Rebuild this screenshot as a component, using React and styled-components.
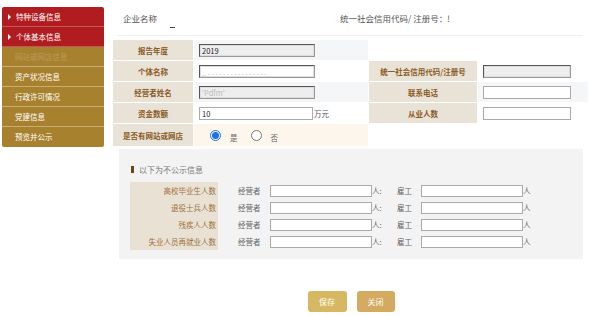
import React from 'react';
import styled, { createGlobalStyle } from 'styled-components';

const GlobalStyle = createGlobalStyle`
  html, body { margin: 0; padding: 0; background: #fff; }
  body { font-family: "Noto Sans CJK SC", "Noto Sans", sans-serif; }
  * { box-sizing: border-box; }
`;

const Page = styled.div`
  display: flex;
  align-items: flex-start;
  width: 590px;
  height: 316px;
  overflow: hidden;
`;

const Sidebar = styled.ul`
  list-style: none;
  margin: 7px 0 0 2px;
  padding: 0;
  width: 102px;
  border-radius: 2px;
  overflow: hidden;
`;

const NavItem = styled.li`
  display: flex;
  align-items: center;
  height: 20px;
  padding-left: ${p => (p.arrow ? '6px' : '13px')};
  background: ${p => (p.active ? '#b11c20' : '#a8812f')};
  border-bottom: 1px solid ${p => (p.active ? '#c4575a' : '#c8ad76')};
  color: ${p => (p.faded ? 'rgba(255,255,255,0.22)' : '#fff')};
  font-size: 7.5px;
  line-height: 1;
  white-space: nowrap;
  &:last-child { border-bottom: none; }
`;

const Arrow = styled.span`
  width: 0;
  height: 0;
  border-left: 3px solid #fff;
  border-top: 3px solid transparent;
  border-bottom: 3px solid transparent;
  margin-right: 5px;
`;

const Main = styled.div`
  margin-left: 9px;
  width: 475px;
  display: flex;
  flex-direction: column;
`;

const Header = styled.div`
  display: flex;
  align-items: center;
  height: 36px;
  margin: 0 0 0 5px;
  width: 465px;
  padding-left: 5px;
  border-bottom: 1px solid #eeeeee;
  color: #555;
  font-size: 8.5px;
`;

const HeaderField = styled.div`
  position: relative;
  width: ${p => p.w || 'auto'};
  white-space: nowrap;
`;

const Mark = styled.span`
  position: absolute;
  left: 47px;
  top: 15px;
  width: 5px;
  height: 1px;
  background: #444;
`;

const Table = styled.div`
  display: grid;
  grid-template-columns: 80px 174px 108px 110px;
  grid-auto-rows: 20px;
  gap: 1px;
  margin-top: 4px;
  background: #fff;
`;

const Label = styled.div`
  display: flex;
  align-items: center;
  justify-content: center;
  background: #e9e2d7;
  color: #8a5a24;
  font-size: 7.5px;
  font-weight: 700;
  white-space: nowrap;
  ${p => p.tall && 'height: 22px;'}
`;

const Cell = styled.div`
  display: flex;
  align-items: center;
  padding-left: ${p => p.pad || '5px'};
  background: ${p => p.bg || '#fff'};
  font-size: 7.5px;
  color: #333;
  ${p => p.span && `grid-column: span ${p.span};`}
  ${p => p.tall && 'height: 22px;'}
`;

const Input = styled.input`
  width: ${p => p.w || '116px'};
  height: 13px;
  padding: 0 2px;
  font-family: inherit;
  font-size: 7.5px;
  color: ${p => (p.faint ? '#bbb' : '#222')};
  background: ${p => (p.readonly ? '#eeeeee' : '#fff')};
  border: 1px solid ${p => (p.dark ? '#555' : '#aaa')};
  ${p => p.dark && 'border-right-color: #999; border-bottom-color: #999; box-shadow: inset 0 0 0 1px #ddd;'}
  border-radius: 0;
  outline: none;
`;

const Unit = styled.span`
  margin-left: ${p => p.gap || '1px'};
  font-size: 7.5px;
  color: #555;
`;

const Radio = styled.span`
  width: 11px;
  height: 11px;
  border-radius: 50%;
  border: 1px solid ${p => (p.on ? '#1a73e8' : '#777')};
  background: #fff;
  display: flex;
  align-items: center;
  justify-content: center;
  margin-left: ${p => p.ml || '0'};
  &::after {
    content: '';
    width: 7px;
    height: 7px;
    border-radius: 50%;
    background: ${p => (p.on ? '#1a73e8' : 'transparent')};
  }
`;

const RadioText = styled.span`
  margin-left: 9px;
  margin-top: 4px;
  font-size: 7.5px;
  color: #666;
`;

const Box = styled.div`
  margin: 5px 0 0 6px;
  width: 464px;
  background: #f3f3f3;
  padding: 14px 0 9px 11px;
`;

const BoxTitle = styled.div`
  display: flex;
  align-items: center;
  height: 12px;
  margin-left: 1px;
  font-size: 8px;
  color: #777;
  margin-bottom: 7px;
  &::before {
    content: '';
    width: 3px;
    height: 7px;
    background: #6e440f;
    margin-right: 5px;
  }
`;

const BoxRow = styled.div`
  display: flex;
  align-items: center;
  height: 17px;
  font-size: 7.5px;
  color: #666;
`;

const BoxLabel = styled.div`
  width: 88px;
  height: 100%;
  display: flex;
  align-items: center;
  justify-content: flex-end;
  padding-right: 2px;
  background: #e9e1d4;
  color: #a07340;
  white-space: nowrap;
`;

const Caption = styled.span`
  width: ${p => p.w};
  margin-left: ${p => p.ml || '0'};
  white-space: nowrap;
`;

const SmallInput = styled.input`
  width: 102px;
  height: 12px;
  padding: 0;
  border: 1px solid #aaa;
  background: #fff;
  outline: none;
`;

const Actions = styled.div`
  display: flex;
  justify-content: center;
  gap: 10px;
  margin: 32px 0 0 6px;
  width: 464px;
`;

const Button = styled.button`
  width: ${p => p.w || '39px'};
  height: 21px;
  border: none;
  border-radius: 3px;
  background: ${p => p.bg};
  color: #fff;
  font-family: inherit;
  font-size: 8px;
  padding: 0;
`;

const navItems = [
  { text: '特种设备信息', active: true, arrow: true },
  { text: '个体基本信息', active: true, arrow: true },
  { text: '网站或网店信息', faded: true },
  { text: '资产状况信息' },
  { text: '行政许可情况' },
  { text: '党建信息' },
  { text: '预览并公示' },
];

const hiddenRows = ['高校毕业生人数', '退役士兵人数', '残疾人人数', '失业人员再就业人数'];

export default function App() {
  return (
    <Page>
      <GlobalStyle />
      <Sidebar>
        {navItems.map(item => (
          <NavItem key={item.text} active={item.active} arrow={item.arrow} faded={item.faded}>
            {item.arrow && <Arrow />}
            {item.text}
          </NavItem>
        ))}
      </Sidebar>
      <Main>
        <Header>
          <HeaderField w="217px">
            企业名称
            <Mark />
          </HeaderField>
          <HeaderField>统一社会信用代码/ 注册号：!</HeaderField>
        </Header>

        <Table>
          <Label>报告年度</Label>
          <Cell bg="#f4f6f8">
            <Input readonly dark defaultValue="2019" />
          </Cell>
          <Cell span={2} />

          <Label>个体名称</Label>
          <Cell>
            <Input dark faint defaultValue="_ . . . . . . . . . . . . . . . ." />
          </Cell>
          <Label>统一社会信用代码/注册号</Label>
          <Cell>
            <Input dark readonly w="88px" />
          </Cell>

          <Label>经营者姓名</Label>
          <Cell bg="#f4f6f8">
            <Input readonly dark faint defaultValue="'Pdfm'" />
          </Cell>
          <Label>联系电话</Label>
          <Cell bg="#f4f6f8">
            <Input w="88px" />
          </Cell>

          <Label>资金数额</Label>
          <Cell>
            <Input w="114px" defaultValue="10" />
            <Unit>万元</Unit>
          </Cell>
          <Label>从业人数</Label>
          <Cell>
            <Input w="88px" />
          </Cell>

          <Label tall>是否有网站或网店</Label>
          <Cell tall bg="#fdf6ec" pad="16px">
            <Radio on />
            <RadioText>是</RadioText>
            <Radio ml="13px" />
            <RadioText>否</RadioText>
          </Cell>
          <Cell span={2} tall />
        </Table>

        <Box>
          <BoxTitle>以下为不公示信息</BoxTitle>
          {hiddenRows.map(label => (
            <BoxRow key={label}>
              <BoxLabel>{label}</BoxLabel>
              <Caption w="32px" ml="20px">经营者</Caption>
              <SmallInput />
              <Caption w="25px">人:</Caption>
              <Caption w="24px">雇工</Caption>
              <SmallInput />
              <Caption w="10px">人</Caption>
            </BoxRow>
          ))}
        </Box>

        <Actions>
          <Button bg="#d7b862">保存</Button>
          <Button w="38px" bg="#d4aa60">关闭</Button>
        </Actions>
      </Main>
    </Page>
  );
}
